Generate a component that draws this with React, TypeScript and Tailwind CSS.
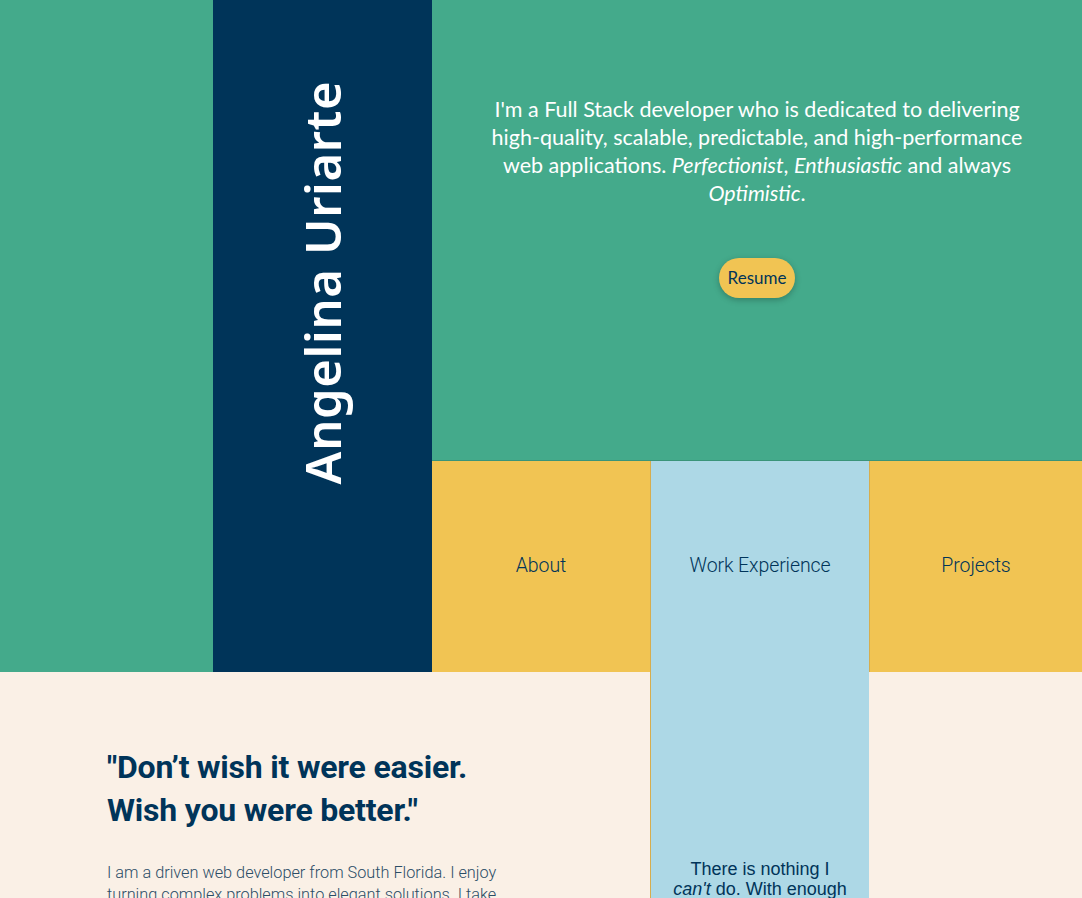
const navItems = [
	{ label: 'About', bg: 'bg-[#f1c453]' },
	{ label: 'Work Experience', bg: 'bg-[#add8e6]' },
	{ label: 'Projects', bg: 'bg-[#f1c453]' },
];

export default function App() {
	return (
		<div className="min-h-screen bg-[#faf0e6] font-['Roboto',sans-serif] text-[#003459]">
			{/* hero */}
			<section className="grid h-[672px] grid-cols-[213px_219px_1fr] bg-[#44aa8b]">
				<div />
				<div className="flex items-center justify-center bg-[#003459] pb-[108px]">
					<h1 className="-rotate-90 whitespace-nowrap font-['Noto_Sans',sans-serif] text-[49px] font-semibold leading-none tracking-[0.6px] text-white">
						Angelina Uriarte
					</h1>
				</div>
				<div className="flex flex-col">
					<div className="flex h-[461px] flex-col items-center border-b border-[#3a9479] pt-[95px]">
						<p className="text-center font-['Lato',sans-serif] text-[21.5px] leading-[28px] text-white">
							I'm a Full Stack developer who is dedicated to delivering
							<br />
							high-quality, scalable, predictable, and high-performance
							<br />
							web applications. <em>Perfectionist</em>, <em>Enthusiastic</em> and always
							<br />
							<em>Optimistic</em>.
						</p>
						<button className="mt-[51px] h-10 w-[76px] rounded-full bg-[#f1c453] font-['Lato',sans-serif] text-[17px] text-[#003459] shadow-[0_2px_6px_rgba(0,0,0,0.25)]">
							Resume
						</button>
					</div>
					<nav className="grid flex-1 grid-cols-[218px_219px_1fr]">
						{navItems.map((item, i) => (
							<div
								key={item.label}
								className={`flex items-center justify-center pb-[2px] text-[19.5px] font-light tracking-[-0.1px] ${item.bg} ${
									i > 0 ? 'border-l border-[#d6ad4e]' : ''
								}`}
							>
								{item.label}
							</div>
						))}
					</nav>
				</div>
			</section>

			{/* about */}
			<section className="grid grid-cols-[650px_219px_1fr]">
				<div className="pl-[107px] pt-[74px]">
					<h2 className="text-[32px] font-bold leading-[43px] tracking-[-0.2px]">
						"Don’t wish it were easier.
						<br />
						Wish you were better."
					</h2>
					<p className="mt-[30px] w-[400px] text-[16.3px] font-light leading-[22px] text-[#2b4d66]">
						I am a driven web developer from South Florida. I enjoy turning complex
						problems into elegant solutions. I take pride in writing clean code and
						building things people love to use.
					</p>
				</div>
				<div className="border-l border-[#d6ad4e] bg-[#add8e6] px-[22px] pt-[187px] text-center font-['Liberation_Sans',sans-serif] text-[18px] leading-[20px]">
					There is nothing I <em>can't</em> do. With enough determination, anything is
					possible.
				</div>
				<div />
			</section>
		</div>
	);
}
